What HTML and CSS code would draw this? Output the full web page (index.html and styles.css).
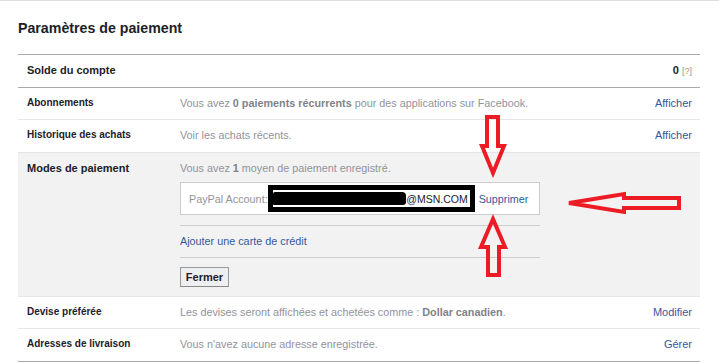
FILE: index.html
```html
<!DOCTYPE html>
<html lang="fr">
<head>
<meta charset="utf-8">
<title>Paramètres de paiement</title>
<link rel="stylesheet" href="styles.css">
</head>
<body>
<div class="topline"></div>
<div class="page">
  <h2 class="title">Paramètres de paiement</h2>
  <div class="table">
    <div class="row row-dark">
      <div class="label label-lg">Solde du compte</div>
      <div class="desc"></div>
      <div class="action"><b class="balance">0</b> <span class="help">[?]</span></div>
    </div>
    <div class="row row-dark">
      <div class="label">Abonnements</div>
      <div class="desc">Vous avez <b>0 paiements récurrents</b> pour des applications sur Facebook.</div>
      <div class="action"><a class="link">Afficher</a></div>
    </div>
    <div class="row row-tall">
      <div class="label">Historique des achats</div>
      <div class="desc">Voir les achats récents.</div>
      <div class="action"><a class="link">Afficher</a></div>
    </div>
    <div class="row row-open">
      <div class="label label-lg">Modes de paiement</div>
      <div class="desc">
        <div>Vous avez <b>1</b> moyen de paiement enregistré.</div>
        <div class="method">
          <span class="method-name">PayPal Account:</span>
          <span class="redact"><span class="scribble"></span><span class="mail">@MSN.COM</span></span>
          <a class="link remove">Supprimer</a>
        </div>
        <div class="add-card"><a class="link">Ajouter une carte de crédit</a></div>
        <button class="btn">Fermer</button>
      </div>
      <div class="action"></div>
    </div>
    <div class="row">
      <div class="label">Devise préférée</div>
      <div class="desc">Les devises seront affichées et achetées comme : <b>Dollar canadien</b>.</div>
      <div class="action"><a class="link">Modifier</a></div>
    </div>
    <div class="row row-tall">
      <div class="label">Adresses de livraison</div>
      <div class="desc">Vous n'avez aucune adresse enregistrée.</div>
      <div class="action"><a class="link">Gérer</a></div>
    </div>
  </div>
</div>
<svg class="arrows" width="719" height="362" viewBox="0 0 719 362">
  <polygon points="487,117 498,117 498,146 504,146 493,173 482,146 487,146"/>
  <polygon points="493,219 505,247 499,247 499,275 488,275 488,247 481,247"/>
  <polygon points="569,203 624,194 624,198 679,198 679,208 624,208 624,212"/>
</svg>
</body>
</html>
```
FILE: styles.css
```css
* { box-sizing: border-box; }
html, body {
  margin: 0;
  padding: 0;
  background: #fff;
  font-family: "Liberation Sans", Arial, Helvetica, sans-serif;
  color: #1d2129;
}
body { position: relative; width: 719px; height: 362px; overflow: hidden; }
.topline { height: 1px; background: #dddfe2; }
.page { padding: 0 19px 0 18px; }
.title {
  margin: 0;
  padding: 19px 0 18px;
  font-size: 14.2px;
  line-height: 16px;
  font-weight: bold;
  color: #1d2129;
}
.table { border-bottom: 1px solid #aaaaaa; }
.row {
  display: grid;
  grid-template-columns: 153px 1fr auto;
  padding: 8px 8px 9px 9px;
  border-top: 1px solid #e5e5e5;
  line-height: 14px;
  font-size: 11px;
}
.row-dark { border-top-color: #aaaaaa; }
.row-tall { padding-bottom: 10px; }
.row-open { background: #f2f2f2; padding-bottom: 9px; }
.label { font-weight: bold; font-size: 10px; color: #1d2129; }
.label-lg { font-size: 11px; }
.desc { color: #90949c; font-size: 10.8px; }
.desc b { font-weight: bold; color: #7f8389; }
.action { text-align: right; font-size: 11px; }
.link { color: #365899; text-decoration: none; }
.balance { color: #1d2129; }
.help { color: #90949c; font-size: 9px; }
.method {
  margin-top: 7px;
  width: 360px;
  height: 33px;
  border: 1px solid #cccccc;
  background: #fff;
  display: flex;
  align-items: center;
  padding: 0 9px 0 8px;
  white-space: nowrap;
}
.method-name { color: #90949c; flex-shrink: 0; }
.redact {
  flex-shrink: 0;
  margin-left: 0;
  width: 207px;
  height: 27px;
  border: 5px solid #000;
  background: #fff;
  display: flex;
  align-items: center;
  justify-content: space-between;
  padding-right: 2px;
}
.scribble {
  width: 134px;
  height: 13px;
  background: #000;
  border-radius: 2px 4px 3px 1px;
}
.mail { color: #1d2129; font-size: 10.5px; }
.remove { margin-left: 4px; flex-shrink: 0; }
.add-card {
  margin-top: 10px;
  width: 360px;
  border-top: 1px solid #cccccc;
  border-bottom: 1px solid #cccccc;
  padding: 8px 0 9px;
}
.btn {
  display: block;
  margin-top: 9px;
  width: 49px;
  height: 20px;
  padding: 0;
  border: 1px solid #999;
  border-bottom-color: #888;
  background: #eeeff1;
  font-family: "Liberation Sans", Arial, sans-serif;
  font-weight: bold;
  font-size: 11px;
  color: #1d2129;
}
.arrows {
  position: absolute;
  left: 0;
  top: 0;
  pointer-events: none;
}
.arrows polygon {
  fill: none;
  stroke: #ed1c24;
  stroke-width: 4;
  stroke-linejoin: miter;
}
```
